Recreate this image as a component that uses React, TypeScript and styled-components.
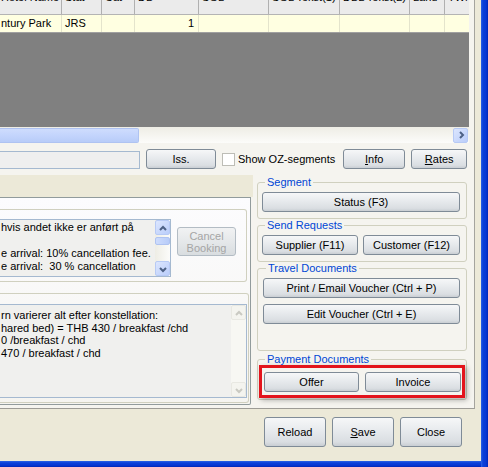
import React from "react";
import styled, { createGlobalStyle } from "styled-components";

const GlobalStyle = createGlobalStyle`
  html, body { margin: 0; padding: 0; background: #ECE9D8; }
  body { font-family: "Liberation Sans", Arial, sans-serif; font-size: 11px; color: #000; }
  * { box-sizing: border-box; }
`;

const columns = [62, 40, 33, 64, 70, 71, 70, 35, 25];
const headers = ["Hotel Name", "Stat", "Cat", "DB", "SGL", "SGL Tekst(1)", "DBL Tekst(2)", "Land", "TWN"];
const row = ["ntury Park", "JRS", "", "1", "", "", "", "", ""];

const Window = styled.div`
  width: 488px;
  height: 467px;
  overflow: hidden;
  display: grid;
  grid-template-columns: 481px 7px;
  grid-template-rows: 461px 6px;
  background: #ECE9D8;
`;

const Client = styled.div`
  display: flex;
  flex-direction: column;
  background: #ECE9D8;
`;

const FrameRight = styled.div`
  grid-row: 1 / 3;
  grid-column: 2;
  background: linear-gradient(to right, #2B62E5 0px, #0A3FD9 2px, #0838D4 5px, #0026B8 7px);
`;

const FrameBottom = styled.div`
  grid-row: 2;
  grid-column: 1;
  background: linear-gradient(to bottom, #2B62E5 0px, #0A3FD9 2px, #0838D4 4px, #0026B8 6px);
`;

const MainPanel = styled.div`
  width: 475px;
  height: 409px;
  background: #F5F4EF;
  border-right: 1px solid #A5A49E;
  border-bottom: 1px solid #9D9C96;
  display: flex;
  flex-direction: column;
`;

const GridView = styled.div`
  width: 469px;
  height: 143px;
  display: flex;
  flex-direction: column;
  overflow: hidden;
`;

const GridRow = styled.div<{ $header?: boolean }>`
  display: grid;
  grid-template-columns: ${columns.map((c) => c + "px").join(" ")};
  height: ${(p) => (p.$header ? 15 : 18)}px;
  background: ${(p) => (p.$header ? "#EBEBEB" : "#FFFFE1")};
  border-bottom: 1px solid ${(p) => (p.$header ? "#B4B4B4" : "#A0A0A0")};
  overflow: hidden;
`;

const Cell = styled.div<{ $header?: boolean; $right?: boolean }>`
  border-right: 1px solid ${(p) => (p.$header ? "#B0B0B0" : "#E4E4CC")};
  padding: ${(p) => (p.$header ? "0 3px" : "0 4px 0 3px")};
  line-height: ${(p) => (p.$header ? "13px" : "17px")};
  white-space: nowrap;
  overflow: hidden;
  text-align: ${(p) => (p.$right ? "right" : "left")};
  &:first-child { padding-left: 1px; }
`;

const HeaderText = styled.div`
  margin-top: -9px;
`;

const GridEmpty = styled.div`
  flex: 1;
  background: #808080;
`;

const HScroll = styled.div`
  height: 16px;
  display: flex;
  align-items: center;
  background: linear-gradient(to bottom, #EEEDE5, #FCFCFA);
  padding-right: 1px;
`;

const HThumb = styled.div`
  width: 139px;
  height: 15px;
  border: 1px solid #AFC3F1;
  border-left: none;
  border-radius: 0 2px 2px 0;
  background: linear-gradient(to bottom, #CEDCFD, #C3D4FC 50%, #B8CCF8);
`;

const ScrollArrow = styled.div<{ $disabled?: boolean }>`
  width: 15px;
  height: 15px;
  border: 1px solid ${(p) => (p.$disabled ? "#E8E8E2" : "#B7CAF5")};
  border-radius: 2px;
  background: ${(p) =>
    p.$disabled ? "#F4F4EF" : "linear-gradient(to bottom right, #DCE6FE, #BACDFA)"};
  display: flex;
  align-items: center;
  justify-content: center;
  flex-shrink: 0;
`;

const Spacer = styled.div`
  flex: 1;
`;

const Toolbar = styled.div`
  height: 32px;
  display: flex;
  align-items: flex-start;
  padding-top: 6px;
`;

const TextBox = styled.div`
  width: 140px;
  height: 18px;
  margin-top: 2px;
  background: #EFEFEF;
  border: 1px solid #A5B9D0;
  border-left: none;
  margin-right: 6px;
`;

const Btn = styled.button<{ $w: number; $h?: number; $gap?: number }>`
  width: ${(p) => p.$w}px;
  height: ${(p) => p.$h ?? 20}px;
  margin-right: ${(p) => p.$gap ?? 0}px;
  padding: 0;
  border: 1px solid ${(p) => (p.disabled ? "#B3BCC4" : "#7F8B97")};
  border-radius: 3px;
  background: ${(p) =>
    p.disabled
      ? "linear-gradient(to bottom, #F1F2F3, #E4E7E9 55%, #D9DDE0)"
      : "linear-gradient(to bottom, #F6F7F8 0%, #E7EAED 45%, #DADEE2 85%, #C9CED3 100%)"};
  font-family: "Liberation Sans", Arial, sans-serif;
  font-size: 11px;
  line-height: 12px;
  color: ${(p) => (p.disabled ? "#A5A5A5" : "#000")};
  flex-shrink: 0;
`;

const Check = styled.div`
  width: 13px;
  height: 13px;
  margin: 4px 3px 0 0;
  border: 1px solid #BDBDB6;
  background: #FFFFFF;
  flex-shrink: 0;
`;

const CheckLabel = styled.div`
  line-height: 13px;
  margin-top: 4px;
  margin-right: 8px;
  white-space: nowrap;
`;

const Lower = styled.div`
  flex: 1;
  display: flex;
`;

const TabControl = styled.div`
  width: 253px;
  display: flex;
  flex-direction: column;
`;

const TabStrip = styled.div`
  height: 22px;
  background: #ECE9D8;
`;

const TabPage = styled.div`
  width: 251px;
  flex: 1;
  margin-bottom: 3px;
  border: 1px solid #919B9C;
  border-left: none;
  border-radius: 0 0 2px 0;
  background: linear-gradient(to bottom, #FCFCFE, #F5F4F0);
  padding-top: 11px;
  display: flex;
  flex-direction: column;
`;

const Group = styled.div<{ $right: number; $top?: number; $h: number; $pad: string }>`
  height: ${(p) => p.$h}px;
  margin-right: ${(p) => p.$right}px;
  margin-top: ${(p) => p.$top ?? 0}px;
  border: 1px solid #D0D0BF;
  border-left: none;
  border-radius: 0 3px 3px 0;
  padding: ${(p) => p.$pad};
  display: flex;
  align-items: flex-start;
`;

const Memo = styled.div<{ $w: number; $h: number; $lh: number }>`
  width: ${(p) => p.$w}px;
  height: ${(p) => p.$h}px;
  border: 1px solid #A5B9D0;
  border-left: none;
  background: #F0F0EE;
  display: flex;
  flex-shrink: 0;
  line-height: ${(p) => p.$lh}px;
`;

const MemoText = styled.div<{ $top: number }>`
  flex: 1;
  padding: ${(p) => p.$top}px 0 0 1px;
  white-space: pre;
  overflow: hidden;
`;

const VScroll = styled.div<{ $disabled?: boolean }>`
  width: 15px;
  display: flex;
  flex-direction: column;
  background: ${(p) => (p.$disabled ? "#F7F7F3" : "linear-gradient(to right, #EEEDE5, #FCFCFA)")};
`;

const VThumb = styled.div`
  height: 8px;
  margin-top: 2px;
  border: 1px solid #AFC3F1;
  border-radius: 2px;
  background: linear-gradient(to right, #CEDCFD, #B8CCF8);
`;

const SidePanel = styled.div`
  flex: 1;
  padding: 1px 0 0 4px;
  display: flex;
  flex-direction: column;
`;

const GroupBox = styled.fieldset<{ $h: number; $top?: number; $pad: string }>`
  width: 210px;
  height: ${(p) => p.$h}px;
  margin: ${(p) => p.$top ?? 0}px 0 0 0;
  padding: ${(p) => p.$pad};
  border: 1px solid #D0D0BF;
  border-radius: 3px;
  min-width: 0;
`;

const Legend = styled.legend`
  padding: 0 2px;
  margin-left: 3px;
  line-height: 12px;
  color: #0046D5;
`;

const BtnRow = styled.div<{ $gap: number }>`
  display: flex;
  gap: ${(p) => p.$gap}px;
`;

const BtnCol = styled.div`
  display: flex;
  flex-direction: column;
  gap: 6px;
`;

const Highlight = styled.div`
  width: 206px;
  height: 33px;
  margin-left: -3px;
  border: 3px solid #E3141C;
  box-shadow: 2px 2px 5px rgba(0, 0, 0, 0.3);
  padding: 4px 0 0 2px;
  display: flex;
  gap: 6px;
`;

const BottomBar = styled.div`
  flex: 1;
  display: flex;
  justify-content: flex-end;
  align-items: flex-start;
  gap: 6px;
  padding: 8px 19px 0 0;
`;

const Chevron = ({ dir, color }: { dir: "up" | "down" | "right"; color: string }) => {
  const d =
    dir === "right" ? "M3 1 L6 4 L3 7" : dir === "up" ? "M1 6 L4 3 L7 6" : "M1 3 L4 6 L7 3";
  return (
    <svg width="8" height="8" viewBox="0 0 8 8">
      <path d={d} fill="none" stroke={color} strokeWidth="2" />
    </svg>
  );
};

const App = () => {
  return (
    <Window>
      <GlobalStyle />
      <Client>
        <MainPanel>
          <GridView>
            <GridRow $header>
              {columns.map((_, i) => (
                <Cell key={i} $header>
                  <HeaderText>{headers[i]}</HeaderText>
                </Cell>
              ))}
            </GridRow>
            <GridRow>
              {row.map((v, i) => (
                <Cell key={i} $right={i === 3}>
                  {v}
                </Cell>
              ))}
            </GridRow>
            <GridEmpty />
            <HScroll>
              <HThumb />
              <Spacer />
              <ScrollArrow>
                <Chevron dir="right" color="#4D6185" />
              </ScrollArrow>
            </HScroll>
          </GridView>

          <Toolbar>
            <TextBox />
            <Btn $w={70} $gap={6}>Iss.</Btn>
            <Check />
            <CheckLabel>Show OZ-segments</CheckLabel>
            <Btn $w={62} $gap={6}>
              <u>I</u>nfo
            </Btn>
            <Btn $w={56}>
              <u>R</u>ates
            </Btn>
          </Toolbar>

          <Lower>
            <TabControl>
              <TabStrip />
              <TabPage>
                <Group $right={3} $h={73} $pad="9px 0 0 0">
                  <Memo $w={171} $h={58} $lh={13}>
                    <MemoText $top={1}>
                      {"hvis andet ikke er anført på\n\ne arrival: 10% cancellation fee.\ne arrival:  30 % cancellation"}
                    </MemoText>
                    <VScroll>
                      <ScrollArrow>
                        <Chevron dir="up" color="#4D6185" />
                      </ScrollArrow>
                      <VThumb />
                      <Spacer />
                      <ScrollArrow>
                        <Chevron dir="down" color="#4D6185" />
                      </ScrollArrow>
                    </VScroll>
                  </Memo>
                  <Btn $w={59} $h={29} disabled style={{ marginLeft: 6, marginTop: 8 }}>
                    Cancel
                    <br />
                    Booking
                  </Btn>
                </Group>
                <Group $right={1} $top={11} $h={110} $pad="10px 1px 0 0">
                  <Memo $w={247} $h={94} $lh={12.5}>
                    <MemoText $top={4}>
                      {"rn varierer alt efter konstellation:\nhared bed) = THB 430 / breakfast /chd\n0 /breakfast / chd\n470 / breakfast / chd"}
                    </MemoText>
                    <VScroll $disabled>
                      <ScrollArrow $disabled>
                        <Chevron dir="up" color="#C9C9C2" />
                      </ScrollArrow>
                      <Spacer />
                      <ScrollArrow $disabled>
                        <Chevron dir="down" color="#C9C9C2" />
                      </ScrollArrow>
                    </VScroll>
                  </Memo>
                </Group>
              </TabPage>
            </TabControl>

            <SidePanel>
              <GroupBox $h={43} $pad="4px 6px 6px 4px">
                <Legend>Segment</Legend>
                <Btn $w={198}>Status (F3)</Btn>
              </GroupBox>
              <GroupBox $h={43} $pad="4px 6px 6px 4px">
                <Legend>Send Requests</Legend>
                <BtnRow $gap={5}>
                  <Btn $w={96}>Supplier (F11)</Btn>
                  <Btn $w={97}>Customer (F12)</Btn>
                </BtnRow>
              </GroupBox>
              <GroupBox $h={89} $pad="4px 6px 6px 5px">
                <Legend>Travel Documents</Legend>
                <BtnCol>
                  <Btn $w={197}>Print / Email Voucher (Ctrl + P)</Btn>
                  <Btn $w={197}>Edit Voucher (Ctrl + E)</Btn>
                </BtnCol>
              </GroupBox>
              <GroupBox $h={47} $top={2} $pad="0 6px 2px 4px">
                <Legend>Payment Documents</Legend>
                <Highlight>
                  <Btn $w={95}>Offer</Btn>
                  <Btn $w={96}>Invoice</Btn>
                </Highlight>
              </GroupBox>
            </SidePanel>
          </Lower>
        </MainPanel>

        <BottomBar>
          <Btn $w={62} $h={30}>Reload</Btn>
          <Btn $w={62} $h={30}>
            <u>S</u>ave
          </Btn>
          <Btn $w={62} $h={30}>Close</Btn>
        </BottomBar>
      </Client>
      <FrameRight />
      <FrameBottom />
    </Window>
  );
};

export default App;
